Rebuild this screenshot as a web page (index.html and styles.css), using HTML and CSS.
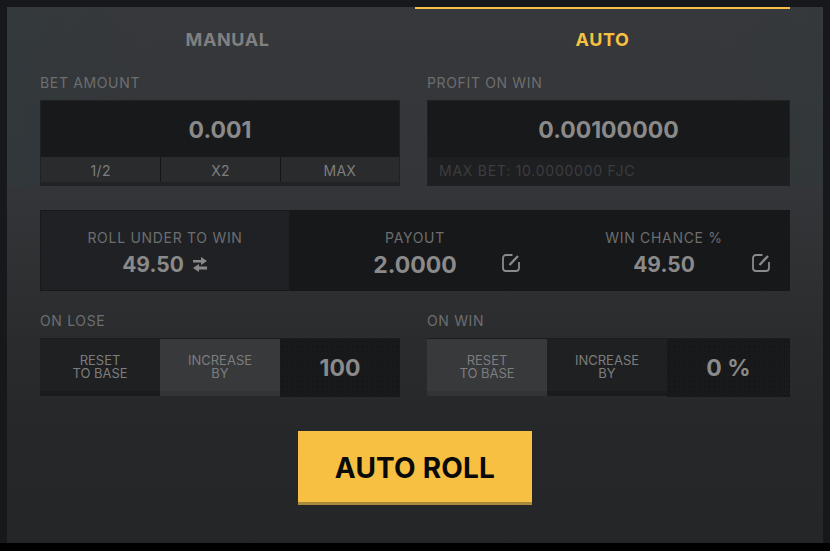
FILE: index.html
```html
<!DOCTYPE html>
<html lang="en">
<head>
    <meta charset="UTF-8">
    <meta name="viewport" content="width=device-width, initial-scale=1.0">
    <title>Auto Roll</title>
    <link rel="stylesheet" href="styles.css">
</head>
<body>
    <div class="panel">
        <!-- Tabs -->
        <div class="tabs">
            <div class="tab">MANUAL</div>
            <div class="tab tab-active">AUTO</div>
        </div>

        <!-- Bet and profit -->
        <div class="two-col bet-row">
            <div>
                <div class="label">BET AMOUNT</div>
                <div class="box">
                    <div class="amount">0.001</div>
                    <div class="quick">
                        <div class="quick-btn">1/2</div>
                        <div class="quick-btn">X2</div>
                        <div class="quick-btn">MAX</div>
                    </div>
                </div>
            </div>
            <div>
                <div class="label">PROFIT ON WIN</div>
                <div class="box">
                    <div class="amount">0.00100000</div>
                    <div class="max-bet">MAX BET: 10.0000000 FJC</div>
                </div>
            </div>
        </div>

        <!-- Roll stats -->
        <div class="stats">
            <div class="stat stat-roll">
                <div class="stat-label">ROLL UNDER TO WIN</div>
                <div class="stat-value">49.50
                    <svg class="swap-icon" viewBox="0 0 16 15" width="16" height="15" aria-hidden="true">
                        <path d="M1 3H9V0L15 4L9 8V5.5H1ZM15 9.5H7V7L1 11L7 15V12.5H15Z" fill="#8a8a8a"/>
                    </svg>
                </div>
            </div>
            <div class="stat stat-edit">
                <div class="stat-label">PAYOUT</div>
                <div class="stat-value stat-wide">2.0000</div>
                <svg class="edit-icon" viewBox="0 0 20 20" width="20" height="20" aria-hidden="true">
                    <path d="M11.5 2H5A3 3 0 0 0 2 5V15A3 3 0 0 0 5 18H15A3 3 0 0 0 18 15V9" fill="none" stroke="#8a8a8a" stroke-width="1.8"/>
                    <path d="M8.5 12L17 3" fill="none" stroke="#8a8a8a" stroke-width="2.4"/>
                </svg>
            </div>
            <div class="stat stat-edit stat-chance">
                <div class="stat-label">WIN CHANCE %</div>
                <div class="stat-value">49.50</div>
                <svg class="edit-icon" viewBox="0 0 20 20" width="20" height="20" aria-hidden="true">
                    <path d="M11.5 2H5A3 3 0 0 0 2 5V15A3 3 0 0 0 5 18H15A3 3 0 0 0 18 15V9" fill="none" stroke="#8a8a8a" stroke-width="1.8"/>
                    <path d="M8.5 12L17 3" fill="none" stroke="#8a8a8a" stroke-width="2.4"/>
                </svg>
            </div>
        </div>

        <!-- On lose / on win -->
        <div class="two-col strategy-row">
            <div>
                <div class="label">ON LOSE</div>
                <div class="strategy">
                    <div class="option">RESET<br>TO BASE</div>
                    <div class="option option-on">INCREASE<br>BY</div>
                    <div class="strategy-value">100</div>
                </div>
            </div>
            <div>
                <div class="label">ON WIN</div>
                <div class="strategy">
                    <div class="option option-on">RESET<br>TO BASE</div>
                    <div class="option">INCREASE<br>BY</div>
                    <div class="strategy-value">0 %</div>
                </div>
            </div>
        </div>

        <button class="roll-btn">AUTO ROLL</button>
    </div>
</body>
</html>
```

FILE: styles.css
```css
/* General styling */
body {
    margin: 0;
    width: 830px;
    height: 551px;
    overflow: hidden;
    background: linear-gradient(#16181b 0, #16181b 543px, #000 543px);
    font-family: 'Inter', 'Liberation Sans', sans-serif;
}
.panel {
    box-sizing: border-box;
    width: 816px;
    height: 536px;
    margin: 7px 0 0 7px;
    padding: 0 33px;
    background:
        linear-gradient(90deg, rgba(46, 58, 62, 0.4), transparent 20%, transparent 85%, rgba(46, 58, 62, 0.3)) 0 0 / 100% 180px no-repeat,
        linear-gradient(#37383b 0, #333538 190px, #2a2b2d 340px, #262729 430px, #252628 100%);
}
/* Tabs */
.tabs {
    display: flex;
    height: 66px;
}
.tab {
    flex: 1;
    box-sizing: border-box;
    padding-top: 21px;
    border-top: 2px solid transparent;
    text-align: center;
    font-size: 18px;
    font-weight: 700;
    letter-spacing: 0.6px;
    line-height: 20px;
    color: #808080;
}
.tab-active {
    border-top-color: #f7c042;
    color: #f7c042;
}
.two-col {
    display: grid;
    grid-template-columns: 360px 363px;
    column-gap: 27px;
}
.label {
    height: 27px;
    font-size: 14px;
    letter-spacing: 0.65px;
    line-height: 20px;
    color: #6d6e6f;
}
/* Bet and profit boxes */
.box {
    box-sizing: border-box;
    height: 86px;
    background: #18191b;
    border: 1px solid #202123;
}
.amount {
    height: 56px;
    text-align: center;
    font-size: 23px;
    font-weight: 700;
    line-height: 58px;
    color: #8a8a8a;
}
.quick {
    display: grid;
    grid-template-columns: repeat(3, 1fr);
    height: 28px;
}
.quick-btn {
    box-sizing: border-box;
    height: 25px;
    margin-bottom: 3px;
    background: #2a2b2d;
    box-shadow: 0 3px 0 #212224;
    border-left: 1px solid #141517;
    text-align: center;
    font-size: 14px;
    letter-spacing: 0.3px;
    line-height: 27px;
    color: #7d7e7f;
}
.quick-btn:first-child {
    border-left: none;
}
.max-bet {
    height: 28px;
    padding-left: 11px;
    background: #1e1f21;
    font-size: 14px;
    letter-spacing: 0.75px;
    line-height: 28px;
    color: #3c3d3f;
}
/* Roll stats */
.stats {
    display: grid;
    grid-template-columns: 250px 250px 250px;
    height: 81px;
    margin-top: 24px;
    background: #17181a;
}
.stat {
    box-sizing: border-box;
    padding-top: 18px;
    text-align: center;
}
.stat-edit {
    position: relative;
}
.stat-chance {
    padding-right: 2px;
}
.stat-roll {
    background: #202124;
    border: 1px solid #18191b;
    padding-top: 17px;
}
.stat-label {
    font-size: 14px;
    letter-spacing: 0.7px;
    line-height: 20px;
    color: #6d6e6f;
}
.stat-value {
    margin-top: 4px;
    font-size: 21px;
    font-weight: 700;
    line-height: 26px;
    color: #8a8a8a;
}
.stat-wide {
    font-size: 23px;
}
.swap-icon {
    margin-left: 3px;
}
.edit-icon {
    position: absolute;
    top: 43px;
    right: 19px;
}
/* On lose / on win */
.strategy-row {
    margin-top: 20px;
}
.strategy {
    display: grid;
    grid-template-columns: 120px 120px 1fr;
    height: 58px;
    background: #17181a;
    border-top: 1px solid #1b1c1e;
    box-sizing: border-box;
}
.option {
    height: 52px;
    padding-top: 15px;
    box-sizing: border-box;
    background: #1f2022;
    box-shadow: 0 5px 0 #1a1b1d;
    text-align: center;
    font-size: 13px;
    line-height: 13px;
    color: #7c7d7e;
}
.option-on {
    background: #38393b;
    box-shadow: 0 5px 0 #333436;
}
.strategy-value {
    text-align: center;
    font-size: 23px;
    font-weight: 700;
    line-height: 58px;
    color: #8a8a8a;
    background-color: #18191b;
    background-image: radial-gradient(#101112 0.7px, transparent 0.8px);
    background-size: 5px 5px;
}
/* Roll button */
.roll-btn {
    display: block;
    width: 234px;
    height: 74px;
    margin: 35px auto 0;
    padding: 3px 0 0;
    background: #f7c042;
    border: none;
    border-bottom: 3px solid #a98a3f;
    border-radius: 0;
    font-family: inherit;
    font-size: 28px;
    font-weight: 700;
    letter-spacing: 0.2px;
    color: #0a0a0a;
    cursor: pointer;
}
```
